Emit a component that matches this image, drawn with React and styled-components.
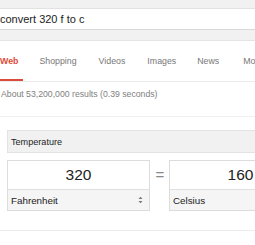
import React from "react";
import styled, { createGlobalStyle } from "styled-components";

const Global = createGlobalStyle`
  html, body { margin: 0; padding: 0; background: #fff; }
  body { width: 255px; height: 245px; overflow: hidden; font-family: "Liberation Sans", Arial, sans-serif; }
`;

const Page = styled.div`
  display: flex;
  flex-direction: column;
  width: 255px;
`;

const TopBar = styled.div`
  background: #f1f1f1;
  padding: 8px 0 10px 0;
  border-bottom: 1px solid #e4e4e4;
`;

const SearchBox = styled.div`
  height: 20px;
  background: #fff;
  border-top: 1px solid #e2e2e2;
  border-bottom: 1px solid #d9d9d9;
  margin-right: -20px;
  display: flex;
  align-items: center;
  padding-left: 0;
  font-size: 11px;
  color: #222;
  white-space: nowrap;
`;

const TabList = styled.div`
  display: flex;
  height: 40px;
  border-bottom: 1px solid #ebebeb;
  white-space: nowrap;
  margin-right: -60px;
`;

const Tab = styled.div`
  display: flex;
  align-items: center;
  box-sizing: border-box;
  height: 40px;
  font-size: 8.8px;
  color: ${(p) => (p.$active ? "#dd4b39" : "#777")};
  font-weight: ${(p) => (p.$active ? 700 : 400)};
  border-bottom: ${(p) => (p.$active ? "2px solid #dd4b39" : "none")};
  padding: ${(p) => (p.$active ? "2px 5px 0 0" : "0")};
  margin-left: ${(p) => p.$gap}px;
`;

const Stats = styled.div`
  height: 27.5px;
  padding-top: 6.5px;
  padding-left: 1px;
  line-height: 11px;
  font-size: 8.7px;
  color: #808080;
  border-bottom: 1px solid #f0f0f0;
  white-space: nowrap;
`;

const Converter = styled.div`
  display: flex;
  flex-direction: column;
  gap: 7px;
  padding: 13px 0 0 7px;
`;

const UnitType = styled.div`
  box-sizing: border-box;
  width: 320px;
  height: 23px;
  background: #f1f1f1;
  border: 1px solid #e3e3e3;
  display: flex;
  align-items: center;
  padding-left: 3px;
  font-size: 9.1px;
  color: #222;
`;

const Row = styled.div`
  display: flex;
  align-items: flex-start;
  width: 400px;
`;

const Column = styled.div`
  box-sizing: border-box;
  width: 143px;
  flex: none;
  border: 1px solid #dcdcdc;
  display: flex;
  flex-direction: column;
`;

const Value = styled.div`
  height: 28px;
  background: #fff;
  display: flex;
  align-items: center;
  justify-content: center;
  font-size: 15.5px;
  color: #222;
  border-bottom: 1px solid #e0e0e0;
`;

const Unit = styled.div`
  height: 20px;
  background: #f5f5f5;
  display: flex;
  align-items: center;
  justify-content: space-between;
  padding: 0 6px 0 3px;
  font-size: 9.8px;
  color: #222;
`;

const Equals = styled.div`
  width: 19px;
  flex: none;
  height: 29px;
  display: flex;
  align-items: center;
  justify-content: center;
  font-size: 15px;
  color: #888;
  padding-left: 1px;
  box-sizing: border-box;
`;

const Divider = styled.div`
  margin-top: 19px;
  height: 1px;
  background: #ececec;
`;

const Arrows = () => (
  <svg width="5" height="8" viewBox="0 0 5 8">
    <path d="M0.5 3 L2.5 0.8 L4.5 3 Z" fill="#777" />
    <path d="M0.5 5 L2.5 7.2 L4.5 5 Z" fill="#777" />
  </svg>
);

const tabs = [
  { label: "Web", gap: 0, active: true },
  { label: "Shopping", gap: 16 },
  { label: "Videos", gap: 22 },
  { label: "Images", gap: 22 },
  { label: "News", gap: 21 },
  { label: "More", gap: 24 },
];

export default function App() {
  return (
    <Page>
      <Global />
      <TopBar>
        <SearchBox>convert 320 f to c</SearchBox>
      </TopBar>
      <TabList>
        {tabs.map((t) => (
          <Tab key={t.label} $active={t.active} $gap={t.gap}>
            {t.label}
          </Tab>
        ))}
      </TabList>
      <Stats>About 53,200,000 results (0.39 seconds)</Stats>
      <Converter>
        <UnitType>Temperature</UnitType>
        <Row>
          <Column>
            <Value>320</Value>
            <Unit>
              Fahrenheit
              <Arrows />
            </Unit>
          </Column>
          <Equals>=</Equals>
          <Column>
            <Value>160</Value>
            <Unit>
              Celsius
              <Arrows />
            </Unit>
          </Column>
        </Row>
      </Converter>
      <Divider />
    </Page>
  );
}
